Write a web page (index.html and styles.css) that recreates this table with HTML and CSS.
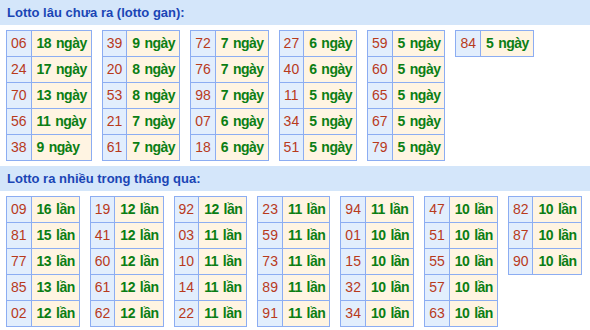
FILE: index.html
```html
<!DOCTYPE html>
<html>
<head>
<meta charset="utf-8">
<link rel="stylesheet" href="styles.css">
</head>
<body>
<div class="head">Lotto lâu chưa ra (lotto gan):</div>
<div class="group">
  <table class="lt"><tr><td class="n">06</td><td class="d">18 ngày</td></tr><tr><td class="n">24</td><td class="d">17 ngày</td></tr><tr><td class="n">70</td><td class="d">13 ngày</td></tr><tr><td class="n">56</td><td class="d">11 ngày</td></tr><tr><td class="n">38</td><td class="d">9 ngày</td></tr></table>
  <table class="lt"><tr><td class="n">39</td><td class="d">9 ngày</td></tr><tr><td class="n">20</td><td class="d">8 ngày</td></tr><tr><td class="n">53</td><td class="d">8 ngày</td></tr><tr><td class="n">21</td><td class="d">7 ngày</td></tr><tr><td class="n">61</td><td class="d">7 ngày</td></tr></table>
  <table class="lt"><tr><td class="n">72</td><td class="d">7 ngày</td></tr><tr><td class="n">76</td><td class="d">7 ngày</td></tr><tr><td class="n">98</td><td class="d">7 ngày</td></tr><tr><td class="n">07</td><td class="d">6 ngày</td></tr><tr><td class="n">18</td><td class="d">6 ngày</td></tr></table>
  <table class="lt"><tr><td class="n">27</td><td class="d">6 ngày</td></tr><tr><td class="n">40</td><td class="d">6 ngày</td></tr><tr><td class="n">11</td><td class="d">5 ngày</td></tr><tr><td class="n">34</td><td class="d">5 ngày</td></tr><tr><td class="n">51</td><td class="d">5 ngày</td></tr></table>
  <table class="lt"><tr><td class="n">59</td><td class="d">5 ngày</td></tr><tr><td class="n">60</td><td class="d">5 ngày</td></tr><tr><td class="n">65</td><td class="d">5 ngày</td></tr><tr><td class="n">67</td><td class="d">5 ngày</td></tr><tr><td class="n">79</td><td class="d">5 ngày</td></tr></table>
  <table class="lt"><tr><td class="n">84</td><td class="d">5 ngày</td></tr></table>
</div>
<div class="head">Lotto ra nhiều trong tháng qua:</div>
<div class="group">
  <table class="lt"><tr><td class="n">09</td><td class="d">16 lần</td></tr><tr><td class="n">81</td><td class="d">15 lần</td></tr><tr><td class="n">77</td><td class="d">13 lần</td></tr><tr><td class="n">85</td><td class="d">13 lần</td></tr><tr><td class="n">02</td><td class="d">12 lần</td></tr></table>
  <table class="lt"><tr><td class="n">19</td><td class="d">12 lần</td></tr><tr><td class="n">41</td><td class="d">12 lần</td></tr><tr><td class="n">60</td><td class="d">12 lần</td></tr><tr><td class="n">61</td><td class="d">12 lần</td></tr><tr><td class="n">62</td><td class="d">12 lần</td></tr></table>
  <table class="lt"><tr><td class="n">92</td><td class="d">12 lần</td></tr><tr><td class="n">03</td><td class="d">11 lần</td></tr><tr><td class="n">10</td><td class="d">11 lần</td></tr><tr><td class="n">14</td><td class="d">11 lần</td></tr><tr><td class="n">22</td><td class="d">11 lần</td></tr></table>
  <table class="lt"><tr><td class="n">23</td><td class="d">11 lần</td></tr><tr><td class="n">59</td><td class="d">11 lần</td></tr><tr><td class="n">73</td><td class="d">11 lần</td></tr><tr><td class="n">89</td><td class="d">11 lần</td></tr><tr><td class="n">91</td><td class="d">11 lần</td></tr></table>
  <table class="lt"><tr><td class="n">94</td><td class="d">11 lần</td></tr><tr><td class="n">01</td><td class="d">10 lần</td></tr><tr><td class="n">15</td><td class="d">10 lần</td></tr><tr><td class="n">32</td><td class="d">10 lần</td></tr><tr><td class="n">34</td><td class="d">10 lần</td></tr></table>
  <table class="lt"><tr><td class="n">47</td><td class="d">10 lần</td></tr><tr><td class="n">51</td><td class="d">10 lần</td></tr><tr><td class="n">55</td><td class="d">10 lần</td></tr><tr><td class="n">57</td><td class="d">10 lần</td></tr><tr><td class="n">63</td><td class="d">10 lần</td></tr></table>
  <table class="lt"><tr><td class="n">82</td><td class="d">10 lần</td></tr><tr><td class="n">87</td><td class="d">10 lần</td></tr><tr><td class="n">90</td><td class="d">10 lần</td></tr></table>
</div>
</body>
</html>
```

FILE: styles.css
```css
html, body {
  margin: 0;
  padding: 0;
  background: #ffffff;
  font-family: "Liberation Sans", Arial, sans-serif;
}
.head {
  height: 25px;
  line-height: 25px;
  padding-left: 7px;
  background: #d4e6fa;
  color: #1a45b5;
  font-size: 13px;
  font-weight: bold;
}
.group {
  display: flex;
  align-items: flex-start;
  gap: 10px;
  padding: 5px 6px;
}
.lt {
  border-collapse: collapse;
}
.lt td {
  border: 1px solid #8cadf2;
  padding: 5px 5px;
  line-height: 15px;
  white-space: nowrap;
}
.lt .n {
  padding: 5px 4px;
  background: #e2eefd;
  color: #b83a1c;
  font-size: 14px;
  text-align: center;
}
.lt .d {
  padding: 5px 4px 5px 5px;
  background: #fff4e2;
  color: #0b7e14;
  font-size: 14px;
  font-weight: bold;
  letter-spacing: -0.5px;
  word-spacing: 1.5px;
  text-align: left;
}
```
